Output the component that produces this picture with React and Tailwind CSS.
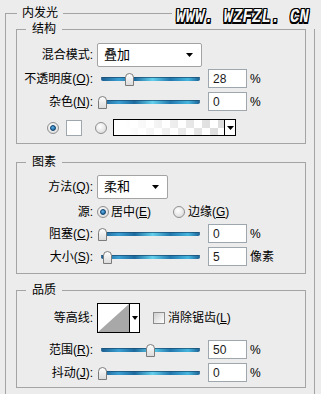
const font = "font-['Liberation_Sans','Noto_Sans_CJK_SC',sans-serif]"

const Key = ({ k }) => (
  <>
    (<span className="underline underline-offset-[1px]">{k}</span>)
  </>
)

const Label = ({ children }) => (
  <div className="w-[76px] shrink-0 text-right whitespace-nowrap">{children}</div>
)

const Dropdown = ({ value, width }) => (
  <div
    className={`${width} h-[24px] flex items-center justify-between bg-white border border-[#a3a3a3] rounded-[2px] pl-[6px] pr-[8px] text-[13px]`}
  >
    <span>{value}</span>
    <svg width="7" height="4" viewBox="0 0 7 4">
      <path d="M0 0h7L3.5 4z" fill="#000" />
    </svg>
  </div>
)

const Thumb = ({ left }) => (
  <svg className="absolute top-[4px]" style={{ left }} width="9" height="13" viewBox="0 0 9 13">
    <defs>
      <linearGradient id="tg" x1="0" y1="0" x2="0" y2="1">
        <stop offset="0" stopColor="#ffffff" />
        <stop offset="1" stopColor="#dadada" />
      </linearGradient>
    </defs>
    <path d="M0.5 4.5Q0.5 0.5 4.5 0.5Q8.5 0.5 8.5 4.5V12.5H0.5Z" fill="url(#tg)" stroke="#7b7b7b" />
  </svg>
)

const Slider = ({ value }) => (
  <div className="relative w-[111px] h-[19px] shrink-0">
    <div className="absolute left-[4px] top-[8px] w-[99px] h-[4px] rounded-[2px] bg-[linear-gradient(to_right,#1b5c8e,#3a9fd2_18%,#1d6a9e_34%,#62d0ec_52%,#2277ad_70%,#45b6de_88%,#1b5f92)]">
      <div className="h-[1px] bg-[#174a70] opacity-70" />
    </div>
    <Thumb left={1 + value * 0.95} />
  </div>
)

const Field = ({ value }) => (
  <div className="w-[39px] h-[19px] shrink-0 bg-white border border-[#9ea6ae] pl-[4px] flex items-center text-[12px] text-[#1a1a1a]">
    {value}
  </div>
)

const SliderRow = ({ label, value, unit, className }) => (
  <div className={`flex items-center h-[19px] ${className}`}>
    <Label>{label}</Label>
    <div className="w-[4px] shrink-0" />
    <Slider value={value} />
    <Field value={value} />
    <span className="ml-[3px]">{unit}</span>
  </div>
)

const Radio = ({ on }) => (
  <div className="w-[12px] h-[12px] shrink-0 rounded-full border border-[#8f8f8f] bg-[radial-gradient(circle_at_40%_35%,#ffffff,#d4d4d4)] flex items-center justify-center">
    {on && (
      <div className="w-[6px] h-[6px] rounded-full bg-[radial-gradient(circle_at_40%_35%,#5fb4ea,#12528a)] border border-[#0c3f6c]" />
    )}
  </div>
)

const Group = ({ title, className, children }) => (
  <fieldset className={`ml-[10px] w-[290px] border border-[#a4a4a4] ${className}`}>
    <legend className="ml-[9px] px-[6px] leading-[14px]">{title}</legend>
    {children}
  </fieldset>
)

export default function App() {
  return (
    <div className={`relative w-[321px] h-[394px] overflow-hidden bg-[#ececec] pt-[6px] text-[12px] leading-[14px] text-black ${font}`}>
      <fieldset className="ml-[5px] w-[310px] h-[420px] border border-[#a4a4a4]">
        <legend className="ml-[11px] px-[5px] leading-[14px]">内发光</legend>

        <Group title="结构" className="mt-[2px] pb-[7px]">
          <div className="flex items-center h-[24px] mt-[7px] gap-[4px]">
            <Label>混合模式:</Label>
            <Dropdown value="叠加" width="w-[105px]" />
          </div>
          <SliderRow label={<>不透明度<Key k="O" />:</>} value={28} unit="%" className="mt-[2px]" />
          <SliderRow label={<>杂色<Key k="N" />:</>} value={0} unit="%" className="mt-[4px]" />
          <div className="flex items-center h-[17px] mt-[8px] pl-[30px]">
            <Radio on />
            <div className="ml-[7px] w-[16px] h-[16px] bg-white border border-[#9ea6ae]" />
            <div className="ml-[13px]">
              <Radio />
            </div>
            <div className="ml-[6px] w-[123px] h-[17px] flex border border-black">
              <div className="flex-1 bg-[linear-gradient(to_right,#fff_10%,#fff0_95%),repeating-conic-gradient(#dddddd_0_25%,#ffffff_0_50%)] bg-[length:100%_100%,16px_16px]" />
              <div className="w-[11px] border-l border-black bg-white flex items-center justify-center">
                <svg width="7" height="4" viewBox="0 0 7 4">
                  <path d="M0 0h7L3.5 4z" fill="#000" />
                </svg>
              </div>
            </div>
          </div>
        </Group>

        <Group title="图素" className="mt-[11px] pb-[7px]">
          <div className="flex items-center h-[24px] mt-[6px] gap-[4px]">
            <Label>方法<Key k="Q" />:</Label>
            <Dropdown value="柔和" width="w-[71px]" />
          </div>
          <div className="flex items-center h-[17px] mt-[4px]">
            <Label>源:</Label>
            <div className="ml-[4px] w-[76px] flex items-center gap-[2px]">
              <Radio on />
              <span>居中<Key k="E" /></span>
            </div>
            <div className="flex items-center gap-[3px]">
              <Radio />
              <span>边缘<Key k="G" /></span>
            </div>
          </div>
          <SliderRow label={<>阻塞<Key k="C" />:</>} value={0} unit="%" className="mt-[4px]" />
          <SliderRow label={<>大小<Key k="S" />:</>} value={5} unit="像素" className="mt-[4px]" />
        </Group>

        <Group title="品质" className="mt-[9px] pb-[5px]">
          <div className="flex items-center h-[30px] mt-[6px]">
            <Label>等高线:</Label>
            <div className="ml-[4px] w-[43px] h-[30px] flex border border-black bg-white">
              <svg width="31" height="28" viewBox="0 0 31 28">
                <path d="M0 28L31 0V28Z" fill="#a8a8a8" />
              </svg>
              <div className="w-[10px] border-l border-black flex items-center justify-center">
                <svg width="6" height="4" viewBox="0 0 6 4">
                  <path d="M0 0h6L3 4z" fill="#000" />
                </svg>
              </div>
            </div>
            <div className="ml-[13px] w-[12px] h-[12px] border border-[#8c8c8c] bg-[linear-gradient(135deg,#cfcfcf,#ffffff)]" />
            <span className="ml-[3px]">消除锯齿<Key k="L" /></span>
          </div>
          <SliderRow label={<>范围<Key k="R" />:</>} value={50} unit="%" className="mt-[7px]" />
          <SliderRow label={<>抖动<Key k="J" />:</>} value={0} unit="%" className="mt-[4px]" />
        </Group>
      </fieldset>

      <div className="absolute left-[172px] top-[4px] w-[149px] h-[25px] bg-[#ececec] pl-[4px] flex items-center">
        <span className="font-['Liberation_Mono',monospace] font-bold italic text-[15.5px] tracking-[0.2px] text-[#f6f6f6] scale-y-[1.35] [text-shadow:1px_0_#000,-1px_0_#000,0_1px_#000,0_-1px_#000,1px_1px_#000,-1px_-1px_#000,1px_-1px_#000,-1px_1px_#000] whitespace-pre">
          WWW. WZFZL. CN
        </span>
      </div>
    </div>
  )
}
